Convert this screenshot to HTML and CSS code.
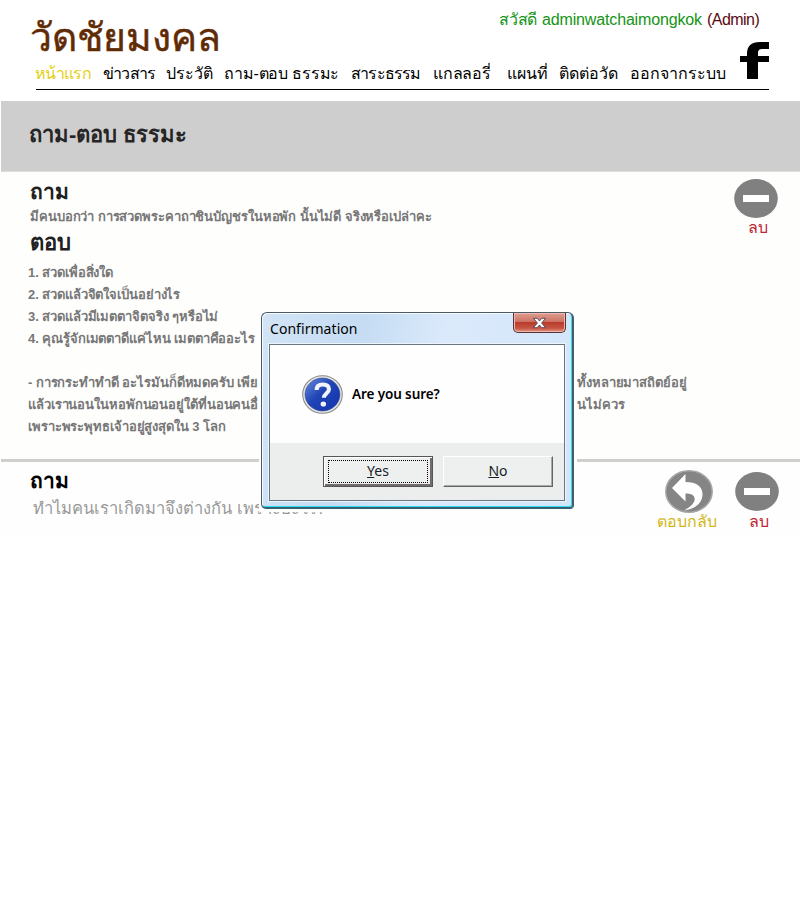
FILE: index.html
```html
<!DOCTYPE html>
<html lang="th">
<head>
<meta charset="utf-8">
<title>วัดชัยมงคล</title>
<link rel="stylesheet" href="styles.css">
</head>
<body>
<header class="site-header">
  <div class="brand-row">
    <h1 class="brand">วัดชัยมงคล</h1>
    <p class="greeting"><span class="hello">สวัสดี</span><span class="user">adminwatchaimongkok</span><span class="role">(Admin)</span></p>
  </div>
  <nav class="nav">
    <a class="active">หน้าแรก</a>
    <a class="tight">ข่าวสาร</a>
    <a>ประวัติ</a>
    <a class="snug">ถาม-ตอบ ธรรมะ</a>
    <a class="tight">สาระธรรม</a>
    <a class="snug">แกลลอรี่</a>
    <a>แผนที่</a>
    <a>ติดต่อวัด</a>
    <a>ออกจากระบบ</a>
    <svg class="facebook" viewBox="0 0 29 37"><path d="M7 37V20H0v-6h7v-2C7 4 11 0 20 0h9v7h-6c-4 0-5 1.500-5 4v3h11v6H18v17z"/></svg>
  </nav>
</header>

<div class="banner"><h2>ถาม-ตอบ ธรรมะ</h2></div>

<main>
  <section class="post answered">
    <div class="content">
      <h3>ถาม</h3>
      <p class="question">มีคนบอกว่า การสวดพระคาถาชินบัญชรในหอพัก นั้นไม่ดี จริงหรือเปล่าคะ</p>
      <h3 class="reply-title">ตอบ</h3>
      <div class="answer">
        <p>1. สวดเพื่อสิ่งใด</p>
        <p>2. สวดแล้วจิตใจเป็นอย่างไร</p>
        <p>3. สวดแล้วมีเมตตาจิตจริง ๆหรือไม่</p>
        <p>4. คุณรู้จักเมตตาดีแค่ไหน เมตตาคืออะไร</p>
        <p class="split gap"><span>- การกระทำทำดี อะไรมันก็ดีหมดครับ เพีย</span><span>ทั้งหลายมาสถิตย์อยู่</span></p>
        <p class="split"><span>แล้วเรานอนในหอพักนอนอยู่ใต้ที่นอนคนอื่</span><span>นไม่ควร</span></p>
        <p>เพราะพระพุทธเจ้าอยู่สูงสุดใน 3 โลก</p>
      </div>
    </div>
    <div class="actions">
      <a class="action delete">
        <svg viewBox="0 0 44 39"><ellipse cx="22" cy="19.500" rx="21.800" ry="19.400" fill="#808080"/><path d="M9 16h26v7H9z" fill="#fff"/></svg>
        <span>ลบ</span>
      </a>
    </div>
  </section>

  <section class="post pending">
    <div class="content">
      <h3>ถาม</h3>
      <p class="question">ทำไมคนเราเกิดมาจึงต่างกัน เพราะอะไร?</p>
    </div>
    <div class="actions">
      <a class="action reply">
        <svg viewBox="0 0 48 43"><ellipse cx="24" cy="21.500" rx="23.200" ry="20.700" fill="#858585" stroke="#a6a6a6" stroke-width="1.500"/><path d="M7 18 20.500 4v8C32 12 38 17 37.500 25c-.5 8-7 14-18.500 15.500C27 36 30.500 32 29.500 28c-.8-3.500-4-4.500-9-4.500v8z" fill="#fff"/></svg>
        <span>ตอบกลับ</span>
      </a>
      <a class="action delete">
        <svg viewBox="0 0 44 39"><ellipse cx="22" cy="19.500" rx="21.800" ry="19.400" fill="#808080"/><path d="M9 16h26v7H9z" fill="#fff"/></svg>
        <span>ลบ</span>
      </a>
    </div>
  </section>
</main>

<div class="backing">
<div class="dialog" role="dialog">
  <div class="titlebar">
    <span>Confirmation</span>
    <button class="close" aria-label="Close"><svg viewBox="0 0 16 12"><path d="M1.500 1h4L8 3.800 10.500 1h4L10.300 6l4.200 5h-4L8 8.200 5.500 11h-4L5.700 6z" fill="#fff" stroke="#4d4656"/></svg></button>
  </div>
  <div class="pane">
    <div class="message">
      <svg viewBox="0 0 40 38">
        <defs><linearGradient id="blue" x1="0" y1="0" x2="1" y2="1"><stop offset="0" stop-color="#6f8fdf"/><stop offset=".45" stop-color="#1f44b4"/><stop offset="1" stop-color="#1533b0"/></linearGradient></defs>
        <ellipse cx="20" cy="19" rx="19.300" ry="18.300" fill="#e4e4e4" stroke="#888"/>
        <ellipse cx="20" cy="19" rx="17" ry="16" fill="url(#blue)" stroke="#2a3f8c" stroke-width=".6"/>
        <path d="M14.300 14.500c0-4 2.500-5.300 6-5.300 3.700 0 6 1.700 6 4.700 0 4-5 4.300-5 8.300" fill="none" stroke="#f2f4fb" stroke-width="4"/>
        <ellipse cx="20.800" cy="28.300" rx="2.700" ry="2.500" fill="#f2f4fb"/>
      </svg>
      <p>Are you sure?</p>
    </div>
    <div class="buttons">
      <button class="btn default"><span><u>Y</u>es</span></button>
      <button class="btn"><span><u>N</u>o</span></button>
    </div>
  </div>
</div>
</div>
</body>
</html>
```
FILE: styles.css
```css
* { margin: 0; padding: 0; box-sizing: border-box; }
body { font-family: "Liberation Sans", sans-serif; background: #fff; color: #000; width: 800px; height: 900px; overflow: hidden; position: relative; }
svg { display: block; }

.site-header { height: 101px; }
.brand-row { display: flex; justify-content: space-between; height: 62px; padding: 0 41px 0 30px; }
.brand { margin-top: 13px; height: 49px; font-size: 39px; line-height: 50px; font-weight: 400; color: #5f2b05; white-space: nowrap; -webkit-text-stroke: .5px #5f2b05; }
.greeting { display: flex; margin-top: 10px; height: 20px; line-height: 20px; font-size: 16px; color: #149414; }
.hello { font-size: 16px; letter-spacing: -.2px; width: 43px; }
.user { width: 165px; letter-spacing: -.15px; }
.role { color: #5b0812; letter-spacing: -.55px; width: 52px; }

.nav { display: grid; grid-template-columns: 68px 63px 58px 127px 82px 74px 52px 71px 110px 29px; width: 734px; height: 28px; margin-left: 35px; font-size: 16px; line-height: 20px; padding-top: 2px; white-space: nowrap; background: linear-gradient(#000, #000) 1px 100% / 733px 1px no-repeat; }
.nav .active { color: #e5cf13; letter-spacing: -.7px; }
.nav .tight { letter-spacing: -.8px; }
.nav .snug { letter-spacing: -.2px; }
.facebook { width: 29px; height: 37px; margin-top: -22px; }

.banner { height: 71px; margin-left: 1px; padding: 19px 0 0 28px; background: #cecece; border-bottom: 1px solid #dcdcd9; }
.banner h2 { font-size: 22px; line-height: 30px; color: #252525; height: 30px; }

main { margin-left: 1px; }
.post { display: flex; justify-content: space-between; background: #fefefd; }
.content { padding-left: 29px; white-space: nowrap; }
h3 { font-size: 21px; line-height: 28px; height: 28px; color: #202020; }
.answered { height: 290px; padding-top: 6px; border-bottom: 3px solid #cfcfcb; }
.answered .question { height: 22px; font-size: 13px; line-height: 22px; font-weight: 700; letter-spacing: -.1px; color: #777; }
.reply-title { margin-top: 1px; font-size: 22px; }
.answer { margin: 5px 0 0 -2px; font-size: 13px; line-height: 22px; font-weight: 700; letter-spacing: -.1px; color: #777; }
.answer p { height: 22px; }
.answer .gap { margin-top: 22px; }
.split { display: grid; grid-template-columns: 232px auto; column-gap: 317px; }
.split span:first-child { overflow: hidden; }

.actions { display: flex; }
.action { display: flex; flex-direction: column; align-items: center; font-size: 16px; line-height: 20px; }
.action span { height: 20px; }
.delete { width: 44px; margin-right: 22px; color: #bd2630; }
.delete svg { width: 44px; height: 39px; }
.answered .actions { padding-top: 1px; }
.delete span { padding-left: 4px; }

.pending { height: 75px; padding-top: 5px; background: #fefefe; }
.pending h3 { color: #000; }
.pending .question { margin: 1px 0 0 3px; height: 24px; font-size: 16.500px; line-height: 24px; color: #999; }
.pending .actions { padding-top: 3px; }
.pending .delete { margin-right: 21px; padding-top: 2px; }
.pending .action span { position: relative; top: 1px; }
.reply { width: 62px; margin-right: 17px; color: #d2b719; }
.reply svg { width: 48px; height: 43px; margin-left: 4px; margin-bottom: -2px; }

.backing { position: absolute; left: 259px; top: 311px; padding: 1px 3px 3px 2px; background: #fefefe; }
.dialog { width: 313px; height: 197px; padding: 0 7px 7px; border: 1px solid #4d5966; border-right: 2px solid #455e6c; border-bottom: 2px solid #39606f; border-radius: 6px 6px 4px 5px; background: linear-gradient(100deg, #d2e4f6, #c5dcf3 30%, #dbeafb 55%, #d2e5fa); box-shadow: inset -1px -1px #25dcf5, inset 1px 1px #f4fbff; font-family: "Noto Sans", sans-serif; }
.titlebar { display: flex; justify-content: space-between; height: 31px; padding-left: 1px; font-size: 14px; line-height: 31px; }
.titlebar span { letter-spacing: .05px; }
.close { width: 53px; height: 20px; margin-right: -1px; border: 1px solid #54333b; border-top: 0; border-radius: 0 0 5px 5px; background: linear-gradient(#dda090, #ce7265 45%, #b93b2b 50%, #c75544 80%, #e39a86); box-shadow: inset 0 0 0 1px #efb8aa; display: grid; place-items: center; }
.close svg { width: 15px; height: 12px; }
.pane { margin: 0; height: 157px; border: 1px solid #687684; outline: 1px solid #edf5fb; background: #fefefe; }
.message { display: flex; align-items: center; height: 98px; padding-left: 32px; gap: 9px; }
.message svg { width: 41px; height: 39px; }
.message p { font-size: 13.500px; font-weight: 600; letter-spacing: -.1px; }
.buttons { display: flex; gap: 10px; height: 57px; padding: 13px 0 0 53px; background: #ebeeed; }
.btn { width: 110px; height: 31px; padding: 3px; font: 14px/20px "Noto Sans", sans-serif; color: #171c28; background: #edf0ef; border: 1px solid; border-color: #fff #686464 #686464 #fff; box-shadow: inset -1px -1px #aaa; }
.btn.default { border: 1px solid #555; box-shadow: inset 1px 1px #fff, inset -2px -2px #716b6b; }
.btn span { display: block; line-height: 20px; padding-top: 1px; height: 23px; }
.default span { border: 1px dotted #000; padding-top: 0; width: 100px; margin-left: 1px; }
```
